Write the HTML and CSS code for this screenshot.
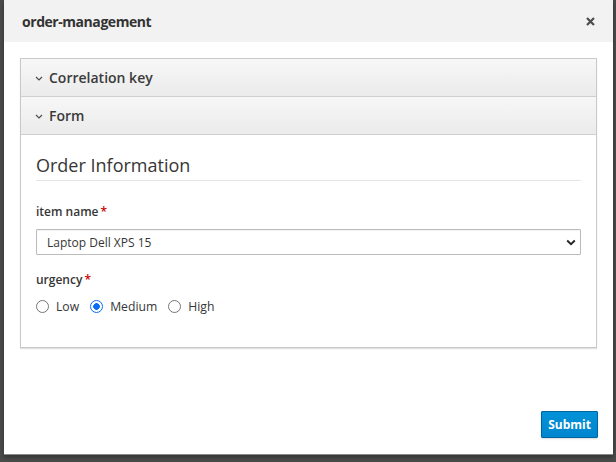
FILE: index.html
```html
<!DOCTYPE html>
<html>
<head>
<meta charset="utf-8">
<link rel="stylesheet" href="styles.css">
</head>
<body>
<div class="backdrop">
  <div class="modal">
    <div class="modal-header">
      <h4 class="modal-title">order-management</h4>
      <button class="close" aria-label="Close">
        <svg width="9" height="9" viewBox="0 0 9 9"><path d="M1 1L8 8M8 1L1 8" stroke="#4d4d4d" stroke-width="2.2" fill="none"/></svg>
      </button>
    </div>
    <div class="modal-body">
      <div class="panel-group">
        <div class="panel-heading">
          <svg class="caret" width="8" height="5" viewBox="0 0 8 5"><path d="M1 1L4 4L7 1" stroke="#4d4d4d" stroke-width="1.2" fill="none"/></svg>
          <span>Correlation key</span>
        </div>
        <div class="panel-heading">
          <svg class="caret" width="8" height="5" viewBox="0 0 8 5"><path d="M1 1L4 4L7 1" stroke="#4d4d4d" stroke-width="1.2" fill="none"/></svg>
          <span>Form</span>
        </div>
        <div class="panel-body">
          <div class="legend">Order Information</div>
          <div class="field">
            <label class="control-label">item name<span class="req">*</span></label>
            <div class="select-wrap">
              <select class="form-control">
                <option>Laptop Dell XPS 15</option>
              </select>
              <svg class="select-caret" width="10" height="7" viewBox="0 0 10 7"><path d="M1.2 1.5L5 5.2L8.8 1.5" stroke="#222" stroke-width="1.8" fill="none"/></svg>
            </div>
          </div>
          <div class="field">
            <label class="control-label">urgency<span class="req">*</span></label>
            <div class="radios">
              <label class="radio"><input type="radio" name="u"><span>Low</span></label>
              <label class="radio"><input type="radio" name="u" checked><span>Medium</span></label>
              <label class="radio"><input type="radio" name="u"><span>High</span></label>
            </div>
          </div>
        </div>
      </div>
    </div>
    <div class="modal-footer">
      <button class="btn-primary">Submit</button>
    </div>
  </div>
</div>
</body>
</html>
```

FILE: styles.css
```css
html, body {
  margin: 0;
  padding: 0;
}
body {
  background: #4a4a4a;
  font-family: "Open Sans", "Liberation Sans", sans-serif;
  color: #363636;
  width: 616px;
  height: 462px;
  overflow: hidden;
}
.backdrop {
  padding: 0 3px 0 4px;
  height: 462px;
  box-sizing: border-box;
}
.modal {
  background: #fff;
  height: 455px;
  display: flex;
  flex-direction: column;
  box-shadow: 0 2px 4px rgba(0,0,0,0.35);
  border-bottom: 1px solid #8a8a8a;
  box-sizing: border-box;
}
.modal-header {
  height: 42px;
  flex: none;
  background: #f2f2f2;
  display: flex;
  align-items: center;
  justify-content: space-between;
  padding: 0 18px 0 18px;
}
.modal-title {
  margin: 0;
  font-size: 14px;
  font-weight: 700;
  color: #333;
  letter-spacing: -0.45px;
}
.close {
  background: none;
  border: 0;
  padding: 0;
  display: flex;
  margin-top: 1px;
}
.modal-body {
  padding: 16px 16px 0;
}
.panel-group {
  border: 1px solid #c9c9c9;
  box-shadow: 0 1px 1px rgba(0,0,0,0.12);
}
.panel-heading {
  height: 37px;
  border-bottom: 1px solid #cfcfcf;
  background: linear-gradient(#f7f7f7, #ebebeb);
  display: flex;
  align-items: center;
  padding: 0 14px;
  font-size: 14px;
  font-weight: 600;
  color: #3a3a3a;
}
.caret {
  margin-right: 6px;
  margin-top: 2px;
}
.panel-body {
  padding: 18px 15px 32px;
}
.legend {
  font-size: 18px;
  line-height: 24px;
  padding-bottom: 3px;
  border-bottom: 1px solid #e5e5e5;
  color: #363636;
}
.field {
  margin-top: 22px;
}
.field + .field {
  margin-top: 16px;
}
.control-label {
  display: block;
  font-size: 12px;
  font-weight: 600;
  line-height: 18px;
  margin-bottom: 8px;
  color: #363636;
}
.req {
  color: #c00;
  margin-left: 2px;
}
.select-wrap {
  position: relative;
}
.form-control {
  appearance: none;
  -webkit-appearance: none;
  display: block;
  width: 100%;
  height: 26px;
  border: 1px solid #bbb;
  border-radius: 1px;
  background: #fff;
  padding: 0 10px;
  font-family: inherit;
  font-size: 12px;
  color: #363636;
  box-shadow: inset 0 1px 1px rgba(0,0,0,0.05);
}
.select-caret {
  position: absolute;
  right: 5px;
  top: 10px;
}
.radios {
  display: flex;
  gap: 11px;
  align-items: center;
  height: 18px;
}
.radio {
  display: flex;
  align-items: center;
  font-size: 12.2px;
  color: #363636;
}
.radio input {
  appearance: none;
  -webkit-appearance: none;
  margin: 0 7px 0 0;
  width: 13px;
  height: 13px;
  border: 1px solid #767676;
  border-radius: 50%;
  background: #fff;
  box-sizing: border-box;
}
.radio input:checked {
  border: 1.5px solid #0a6cf5;
  background: radial-gradient(circle, #0a6cf5 0 3px, #fff 3.6px);
}
.modal-footer {
  margin-top: auto;
  display: flex;
  justify-content: flex-end;
  padding: 0 15px 15px;
}
.btn-primary {
  background: linear-gradient(#0292d8, #0085cf);
  border: 1px solid #00659c;
  color: #fff;
  font-family: inherit;
  font-size: 12px;
  font-weight: 700;
  height: 27px;
  padding: 0 6px;
  border-radius: 1px;
  box-shadow: 0 1px 2px rgba(0,0,0,0.15);
  margin-bottom: 1px;
}
```
